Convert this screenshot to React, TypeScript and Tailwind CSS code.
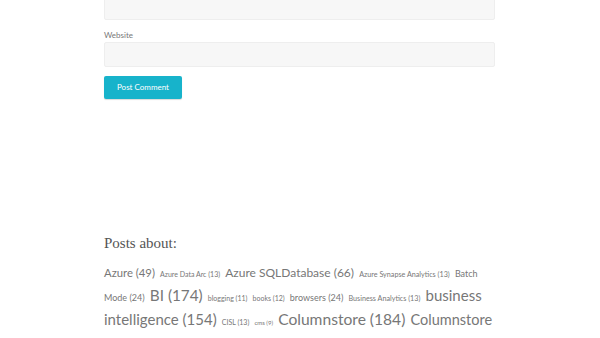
import React from "react";

const tags: [string, number][] = [
  ["Azure (49)", 11.3],
  ["Azure Data Arc (13)", 7],
  ["Azure SQLDatabase (66)", 12],
  ["Azure Synapse Analytics (13)", 7.2],
  ["Batch Mode (24)", 9],
  ["BI (174)", 15.3],
  ["blogging (11)", 7],
  ["books (12)", 7],
  ["browsers (24)", 9],
  ["Business Analytics (13)", 7.2],
  ["business intelligence (154)", 15],
  ["CISL (13)", 7],
  ["cms (9)", 6],
  ["Columnstore (184)", 15.6],
  ["Columnstore", 14.5],
];

export default function App() {
  return (
    <div className="w-[600px] h-[338px] overflow-hidden bg-white" style={{ fontFamily: "Lato, 'Noto Sans', sans-serif" }}>
      <div className="ml-[104px] w-[391px]">
        <div className="h-[25px] -mt-[5px] bg-[#f7f7f7] border border-[#eeeeee] rounded-[2px]" />
        <div className="mt-[10px] text-[8px] leading-[10px] text-[#777]">Website</div>
        <div className="mt-[2px] h-[25px] bg-[#f7f7f7] border border-[#eeeeee] rounded-[2px]" />
        <button className="mt-[9px] w-[78px] h-[23px] bg-[#17b3cb] rounded-[2px] text-white text-[8px] leading-[23px] shadow-[0_1px_1px_rgba(0,0,0,0.15)]">
          Post Comment
        </button>
        <div className="mt-[134px] text-[15px] leading-[20px] text-[#555]" style={{ fontFamily: "'Liberation Serif', serif" }}>
          Posts about:
        </div>
        <p className="mt-[6px] text-[16px] leading-[24px] text-[#777]">
          {tags.map(([t, s], i) => (
            <React.Fragment key={i}>
              <span className="leading-none" style={{ fontSize: s }}>{t}</span>
              <span className="leading-none text-[20px]"> </span>
            </React.Fragment>
          ))}
        </p>
      </div>
    </div>
  );
}
